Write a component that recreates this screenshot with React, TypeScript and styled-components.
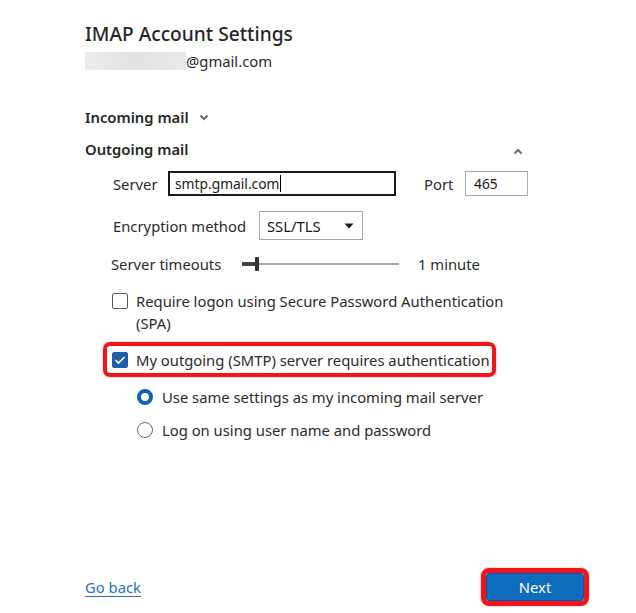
import React from "react";
import styled, { createGlobalStyle } from "styled-components";

const Global = createGlobalStyle`
  html, body { margin: 0; padding: 0; background: #ffffff; }
  body { font-family: "Noto Sans", "Open Sans", sans-serif; color: #2b2b2b; }
  * { box-sizing: border-box; }
`;

const FS = "14.8px";

const Page = styled.div`
  width: 636px;
  height: 613px;
  padding: 22px 0 7px 85px;
  display: flex;
  flex-direction: column;
  overflow: hidden;
`;

const Title = styled.div`
  font-size: 19.2px;
  line-height: 24px;
  font-weight: 500;
  color: #262626;
`;

const EmailRow = styled.div`
  margin-top: 3px;
  height: 24px;
  display: flex;
  align-items: center;
  font-size: ${FS};
`;

const Blur = styled.div`
  width: 101px;
  height: 18px;
  background: linear-gradient(90deg, #ececec, #e2e2e2 50%, #e9e9e9);
  filter: blur(0.6px);
`;

const SectionHeader = styled.div<{ $mt: number; $wide?: boolean }>`
  margin-top: ${(p) => p.$mt}px;
  height: 22px;
  display: flex;
  align-items: center;
  justify-content: ${(p) => (p.$wide ? "space-between" : "flex-start")};
  width: ${(p) => (p.$wide ? "438px" : "auto")};
  font-size: ${FS};
  font-weight: 600;
  color: #262626;
`;

const Chevron = styled.svg<{ $ml?: number }>`
  margin-left: ${(p) => p.$ml ?? 0}px;
  flex: none;
`;

const FieldRow = styled.div<{ $mt: number; $pl?: number; $h: number }>`
  margin-top: ${(p) => p.$mt}px;
  padding-left: ${(p) => p.$pl ?? 28}px;
  height: ${(p) => p.$h}px;
  display: flex;
  align-items: center;
  font-size: ${FS};
`;

const Label = styled.span<{ $w: number; $ml?: number }>`
  width: ${(p) => p.$w}px;
  margin-left: ${(p) => p.$ml ?? 0}px;
  flex: none;
  white-space: nowrap;
`;

const TextBox = styled.div<{ $w: number; $focused?: boolean }>`
  width: ${(p) => p.$w}px;
  height: 25px;
  border: ${(p) => (p.$focused ? "2px solid #1a1a1a" : "1px solid #a8a8a8")};
  padding-left: ${(p) => (p.$focused ? 5 : 8)}px;
  display: flex;
  align-items: center;
  font-size: 13.8px;
  color: #1a1a1a;
`;

const Caret = styled.span`
  display: inline-block;
  width: 1px;
  height: 17px;
  background: #000;
  margin-left: 1px;
`;

const Select = styled.div`
  width: 104px;
  height: 29px;
  border: 1px solid #a8a8a8;
  padding: 0 8px 0 7px;
  display: flex;
  align-items: center;
  justify-content: space-between;
  font-size: ${FS};
  color: #1a1a1a;
`;

const Slider = styled.div`
  width: 157px;
  height: 16px;
  position: relative;
  flex: none;
`;

const TrackFill = styled.div`
  position: absolute;
  left: 0;
  top: 6px;
  width: 14px;
  height: 4px;
  background: #444;
`;

const TrackRest = styled.div`
  position: absolute;
  left: 14px;
  right: 0;
  top: 7px;
  height: 2px;
  background: #a9a9a9;
`;

const Thumb = styled.div`
  position: absolute;
  left: 13px;
  top: 1px;
  width: 4px;
  height: 14px;
  background: #333;
  border-radius: 1px;
`;

const SliderValue = styled.span`
  margin-left: 19px;
  white-space: nowrap;
`;

const CheckRow = styled.div<{ $mt: number }>`
  margin-top: ${(p) => p.$mt}px;
  padding-left: 27px;
  display: flex;
  align-items: flex-start;
  font-size: ${FS};
  line-height: 22px;
`;

const Box = styled.div<{ $checked?: boolean }>`
  width: 16px;
  height: 16px;
  flex: none;
  margin-top: 3px;
  border: 1px solid ${(p) => (p.$checked ? "#1a5fa8" : "#5a5a5a")};
  background: ${(p) => (p.$checked ? "#1a5fa8" : "#fff")};
  border-radius: 2px;
  display: flex;
  align-items: center;
  justify-content: center;
`;

const CheckText = styled.span<{ $w?: number }>`
  margin-left: 8px;
  max-width: ${(p) => p.$w ?? 400}px;
`;

const Highlight = styled.div`
  margin-top: 8px;
  margin-left: 18px;
  width: 393px;
  height: 35px;
  border: 4px solid #f0141c;
  border-radius: 7px;
  box-shadow: 0 0 2px rgba(240, 20, 28, 0.5);
  padding-left: 5px;
  display: flex;
  align-items: center;
  font-size: ${FS};
  white-space: nowrap;
`;

const HighlightBox = styled(Box)`
  margin-top: 0;
`;

const RadioRow = styled.div<{ $mt: number }>`
  margin-top: ${(p) => p.$mt}px;
  padding-left: 52px;
  height: 22px;
  display: flex;
  align-items: center;
  font-size: ${FS};
`;

const Radio = styled.div<{ $on?: boolean }>`
  width: 16px;
  height: 16px;
  flex: none;
  border-radius: 50%;
  border: ${(p) => (p.$on ? "4px solid #0f62b0" : "1px solid #6a6a6a")};
  background: #fff;
`;

const RadioText = styled.span`
  margin-left: 9px;
  white-space: nowrap;
`;

const Footer = styled.div`
  margin-top: auto;
  width: 504px;
  display: flex;
  align-items: center;
  justify-content: space-between;
`;

const Link = styled.a`
  font-size: ${FS};
  color: #2a72c1;
  text-decoration: underline;
  text-underline-offset: 3px;
  cursor: pointer;
`;

const NextOutline = styled.div`
  width: 108px;
  height: 38px;
  border: 5px solid #f0141c;
  border-radius: 8px;
  box-shadow: 0 0 2px rgba(240, 20, 28, 0.5);
  display: flex;
`;

const NextButton = styled.button`
  flex: 1;
  border: 1px solid #0b569c;
  border-radius: 3px;
  background: #0f6cbd;
  color: #fff;
  font-family: inherit;
  font-size: ${FS};
  padding: 0;
  cursor: pointer;
`;

const ChevronDown = ({ ml }: { ml?: number }) => (
  <Chevron $ml={ml} width="10" height="7" viewBox="0 0 10 7">
    <path d="M1.5 1.5 L5 5 L8.5 1.5" fill="none" stroke="#6b6b6b" strokeWidth="2" />
  </Chevron>
);

const ChevronUp = () => (
  <Chevron width="10" height="7" viewBox="0 0 10 7" style={{ marginTop: 4 }}>
    <path d="M1.5 5.5 L5 2 L8.5 5.5" fill="none" stroke="#6b6b6b" strokeWidth="2" />
  </Chevron>
);

export default function App() {
  return (
    <>
      <Global />
      <Page>
        <Title>IMAP Account Settings</Title>
        <EmailRow>
          <Blur />
          <span>@gmail.com</span>
        </EmailRow>

        <SectionHeader $mt={33}>
          Incoming mail
          <ChevronDown ml={10} />
        </SectionHeader>
        <SectionHeader $mt={10} $wide>
          Outgoing mail
          <ChevronUp />
        </SectionHeader>

        <FieldRow $mt={11} $h={25}>
          <Label $w={55}>Server</Label>
          <TextBox $w={228} $focused>
            smtp.gmail.com<Caret />
          </TextBox>
          <Label $w={41} $ml={28}>Port</Label>
          <TextBox $w={63}>465</TextBox>
        </FieldRow>

        <FieldRow $mt={15} $h={29}>
          <Label $w={146}>Encryption method</Label>
          <Select>
            SSL/TLS
            <svg width="10" height="6" viewBox="0 0 10 6">
              <path d="M0.5 0.5 H9.5 L5 5.5 Z" fill="#1a1a1a" />
            </svg>
          </Select>
        </FieldRow>

        <FieldRow $mt={14} $h={20} $pl={26}>
          <Label $w={131}>Server timeouts</Label>
          <Slider>
            <TrackFill />
            <TrackRest />
            <Thumb />
          </Slider>
          <SliderValue>1 minute</SliderValue>
        </FieldRow>

        <CheckRow $mt={16}>
          <Box />
          <CheckText $w={380}>
            Require logon using Secure Password Authentication (SPA)
          </CheckText>
        </CheckRow>

        <Highlight>
          <HighlightBox $checked>
            <svg width="12" height="10" viewBox="0 0 12 10">
              <path d="M1.5 5 L4.5 8 L10.5 2" fill="none" stroke="#fff" strokeWidth="1.6" />
            </svg>
          </HighlightBox>
          <CheckText>My outgoing (SMTP) server requires authentication</CheckText>
        </Highlight>

        <RadioRow $mt={9}>
          <Radio $on />
          <RadioText>Use same settings as my incoming mail server</RadioText>
        </RadioRow>
        <RadioRow $mt={11}>
          <Radio />
          <RadioText>Log on using user name and password</RadioText>
        </RadioRow>

        <Footer>
          <Link>Go back</Link>
          <NextOutline>
            <NextButton>Next</NextButton>
          </NextOutline>
        </Footer>
      </Page>
    </>
  );
}
